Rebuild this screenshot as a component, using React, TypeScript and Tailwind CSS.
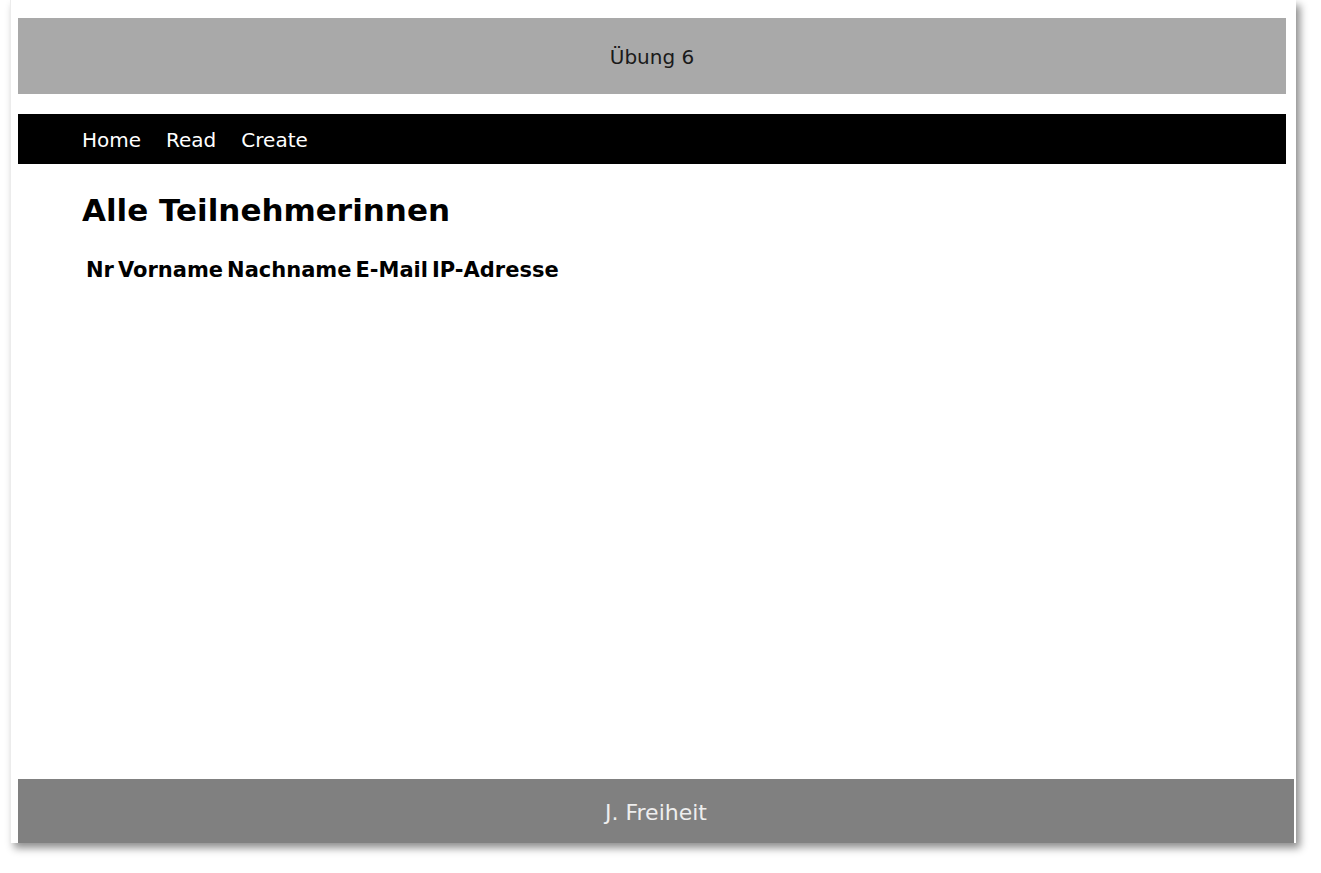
import React from "react";

export default function App() {
  const links = ["Home", "Read", "Create"];
  const columns = ["Nr", "Vorname", "Nachname", "E-Mail", "IP-Adresse"];

  return (
    <div className="w-full h-[873px] bg-white pl-[10px] overflow-hidden [font-family:'DejaVu_Sans',Verdana,sans-serif]">
      <div className="w-[1286px] h-[843px] bg-white flex flex-col border-l border-[#ececec] shadow-[4px_5px_8px_rgba(0,0,0,0.45)]">
        <header className="ml-[7px] mr-[10px] mt-[18px] h-[76px] pt-[2px] bg-[#a9a9a9] flex items-center justify-center text-[20px] text-[#1a1a1a]">
          Übung 6
        </header>

        <nav className="ml-[7px] mr-[10px] mt-[20px] h-[50px] pt-[2px] bg-black flex items-center gap-[25px] pl-[64px] text-[20px] text-white">
          {links.map((l) => (
            <a key={l} href="#">
              {l}
            </a>
          ))}
        </nav>

        <main className="pl-[71px] pt-[26px]">
          <h2 className="text-[31px] font-bold text-black leading-[40px]">
            Alle Teilnehmerinnen
          </h2>
          <table className="mt-[27px] ml-[2px]">
            <thead>
              <tr className="text-[21px] font-bold text-black">
                {columns.map((c) => (
                  <th key={c} className="px-[2px] text-left font-bold leading-[26px]">
                    {c}
                  </th>
                ))}
              </tr>
            </thead>
          </table>
        </main>

        <footer className="mt-auto ml-[7px] mr-[2px] h-[64px] pt-[3px] bg-[#808080] flex items-center justify-center text-[22px] text-[#eeeeee]">
          J. Freiheit
        </footer>
      </div>
    </div>
  );
}
